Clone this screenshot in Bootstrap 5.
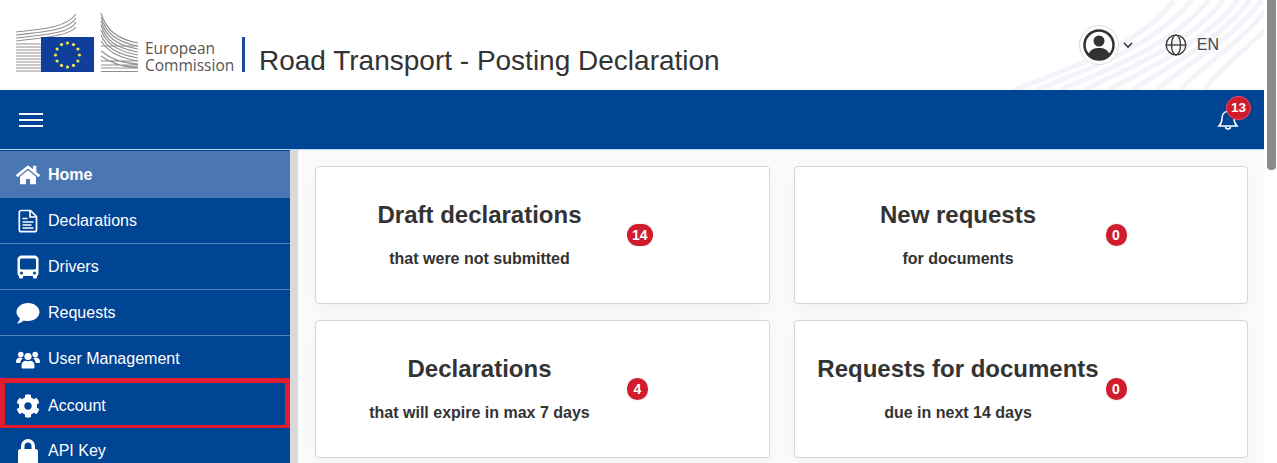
<!DOCTYPE html>
<html lang="en">
  <head>
    <meta charset="UTF-8" />
    <meta name="viewport" content="width=device-width, initial-scale=1.0" />
    <title>Road Transport - Posting Declaration</title>
    <link href="https://cdn.jsdelivr.net/npm/bootstrap@5.3.0/dist/css/bootstrap.min.css" rel="stylesheet" />
    <style>
      html, body {
        height: 463px;
        overflow: hidden;
      }
      body {
        font-family: "Liberation Sans", Arial, sans-serif;
        color: #333;
        background: #fff;
      }
      .page-col {
        width: 1264px;
        flex: none;
      }
      .fake-scroll {
        width: 13px;
        flex: none;
        padding: 0 1px 0 3px;
        background: #fff;
      }
      .fake-scroll div {
        height: 170px;
        background: #8a8a8a;
        border-radius: 0 0 4px 4px;
      }
      .top-head {
        height: 90px;
        padding-left: 16px;
        position: relative;
        overflow: hidden;
      }
      .head-waves {
        position: absolute;
        right: 0;
        top: 0;
      }
      .logo-pic {
        margin-top: 13px;
        flex: none;
      }
      .logo-text {
        font-family: "Open Sans", sans-serif;
        font-size: 15.5px;
        line-height: 17px;
        color: #555;
        margin: 40px 0 0 7px;
        width: 97px;
        flex: none;
      }
      .logo-rule {
        width: 3px;
        height: 35px;
        background: #1d4a9c;
        margin: 37px 14px 0 0;
        flex: none;
      }
      .app-title {
        font-size: 28px;
        line-height: 32px;
        font-weight: 400;
        margin: 45px 0 0;
        color: #333;
        white-space: nowrap;
      }
      .head-tools {
        position: relative;
        margin: 25px 45px 0 auto;
        height: 40px;
      }
      .user-ring {
        width: 40px;
        height: 40px;
        border-radius: 50%;
        border: 1px solid #ddd;
        background: #fff;
      }
      .lang-txt {
        font-size: 16px;
        color: #444;
        margin-left: 10px;
      }
      .blue-bar {
        height: 60px;
        background: #004494;
        border-bottom: 1px solid #b9d4ee;
        padding: 0 24px 0 19px;
      }
      .burger {
        width: 24px;
        height: 14px;
        border-top: 2px solid #fff;
        border-bottom: 2px solid #fff;
        position: relative;
      }
      .burger::after {
        content: "";
        position: absolute;
        left: 0;
        right: 0;
        top: 4px;
        height: 2px;
        background: #fff;
      }
      .bell-wrap {
        position: relative;
        width: 24px;
        height: 24px;
      }
      .bell-count {
        position: absolute;
        left: 10px;
        top: -12px;
        font-size: 13.5px;
        line-height: 14px;
        padding: 4px 4px;
        min-width: 24px;
        border-radius: 12px;
        background: #d01c2c;
        border: 1px solid #e46;
      }
      .lower-wrap {
        height: 314px;
        background: #fafafa;
        overflow: hidden;
      }
      .side-menu {
        width: 298px;
        flex: none;
        background: #004494;
        border-right: 8px solid #d9d9d9;
        border-radius: 0;
        padding-top: 1px;
        --bs-list-group-bg: transparent;
        --bs-list-group-border-width: 0;
      }
      .side-link {
        position: relative;
        height: 46px;
        flex: none;
        padding: 1px 0 0 16px;
        color: #fff;
        background: #004494;
        font-size: 16px;
        border-bottom: 1px solid #4d7fb8 !important;
      }
      .side-link.home-on {
        height: 47px;
        background: #4a77b4;
        font-weight: 700;
        border-bottom: 0 !important;
      }
      .side-link svg {
        width: 24px;
        height: 24px;
        margin-right: 8px;
        flex: none;
        fill: #fff;
      }
      .side-link.marked {
        border-bottom: 0 !important;
      }
      .side-link.marked::after {
        content: "";
        position: absolute;
        left: 0;
        right: 0;
        top: -4px;
        height: 52px;
        border: 5px solid #e31b2f;
      }
      .main-zone {
        flex: 1;
        padding: 16px 16px 0 17px;
        overflow: hidden;
      }
      .stat-card {
        height: 138px;
        padding-left: 16px;
        border: 1px solid #d6d6d6;
        border-radius: 4px;
        box-shadow: 0 6px 14px rgba(0, 0, 0, 0.03);
      }
      .stat-text {
        width: 295px;
        flex: none;
        text-align: center;
        font-weight: 700;
      }
      .stat-text h2 {
        font-size: 24px;
        line-height: 28px;
        font-weight: 700;
        margin: 0 0 20px;
        color: #333;
        white-space: nowrap;
      }
      .stat-text p {
        font-size: 16px;
        line-height: 20px;
        margin: 0;
      }
      .stat-count {
        font-size: 14px;
        line-height: 14px;
        padding: 4px 5px;
        min-width: 21px;
        border-radius: 11px;
        background: #d01c2c;
        box-shadow: 0 0 2px rgba(0, 0, 0, 0.2);
      }
    </style>
  </head>
  <body>
    <div class="d-flex">
      <div class="page-col">
        <header class="top-head d-flex">
          <svg class="head-waves" width="260" height="90" viewBox="0 0 260 90" fill="none" stroke="#f3f4f9" stroke-width="5">
            <path d="M10 90C90 60 140 40 170 0" />
            <path d="M32 90C105 62 155 40 188 0" />
            <path d="M56 90C120 64 172 40 205 0" />
            <path d="M80 90C135 64 188 40 220 0" />
            <path d="M104 90C150 66 203 40 234 0" />
            <path d="M128 90C165 66 216 40 246 0" />
            <path d="M152 90C180 66 228 40 258 0" />
            <path d="M176 90C198 66 240 40 262 10" />
            <path d="M200 90C215 70 245 45 262 30" />
          </svg>
          <svg class="logo-pic" width="122" height="60" viewBox="0 0 122 60" fill="none">
            <g stroke="#8f8f8f" stroke-width="1.1">
              <path d="M0 19C25 16 50 15 60 1" />
              <path d="M0 22C25 19 52 18 60 5" />
              <path d="M0 25C25 22 54 21 60 9" />
              <path d="M0 28C20 25 52 24 60 14" />
              <path d="M0 31H25M0 34H25M0 37H25M0 40H25M0 43H25M0 46H25M0 49H25M0 52H25M0 55H25M0 58H25" />
              <path d="M85 0C90 16 100 26 122 30" />
              <path d="M85 4C90 20 100 29 122 33" />
              <path d="M85 8C90 24 100 32 122 36" />
              <path d="M85 12C90 28 100 35 122 39" />
              <path d="M85 17C90 30 100 38 122 42" />
              <path d="M85 22C90 34 100 41 122 45" />
              <path d="M85 28C92 38 100 44 122 48" />
              <path d="M85 33H122M85 38C95 46 105 50 122 51M85 43C95 50 105 54 122 54M85 48H122M85 52H122M85 55H122M85 58.500H122" />
            </g>
            <rect x="25" y="24" width="53" height="35" fill="#0f3f9b" />
            <g fill="#f2e85a">
              <circle cx="51.500" cy="30" r="1.600" />
              <circle cx="57.500" cy="31.600" r="1.600" />
              <circle cx="61.900" cy="36" r="1.600" />
              <circle cx="63.500" cy="42" r="1.600" />
              <circle cx="61.900" cy="48" r="1.600" />
              <circle cx="57.500" cy="52.400" r="1.600" />
              <circle cx="51.500" cy="54" r="1.600" />
              <circle cx="45.500" cy="52.400" r="1.600" />
              <circle cx="41.100" cy="48" r="1.600" />
              <circle cx="39.500" cy="42" r="1.600" />
              <circle cx="41.100" cy="36" r="1.600" />
              <circle cx="45.500" cy="31.600" r="1.600" />
            </g>
          </svg>
          <div class="logo-text">European Commission</div>
          <div class="logo-rule"></div>
          <h1 class="app-title">Road Transport - Posting Declaration</h1>
          <div class="head-tools d-flex align-items-center">
            <div class="user-ring d-flex align-items-center justify-content-center">
              <svg width="34" height="34" viewBox="0 0 34 34">
                <circle cx="17" cy="17" r="14.500" fill="none" stroke="#333" stroke-width="2.500" />
                <circle cx="17" cy="13" r="5.500" fill="#333" />
                <path d="M6.500 26.500C8 21.500 12 20 17 20s9 1.500 10.500 6.500A14 14 0 0 1 17 31 14 14 0 0 1 6.500 26.500z" fill="#333" />
              </svg>
            </div>
            <svg class="ms-1 me-4" width="10" height="8" viewBox="0 0 10 8" fill="none" stroke="#333" stroke-width="1.600"><path d="M1 2l4 4 4-4" /></svg>
            <svg class="ms-2" width="22" height="22" viewBox="0 0 22 22" fill="none" stroke="#333" stroke-width="1.300">
              <circle cx="11" cy="11" r="9.800" />
              <ellipse cx="11" cy="11" rx="4.500" ry="9.800" />
              <path d="M1.200 11h19.600" />
            </svg>
            <span class="lang-txt">EN</span>
          </div>
        </header>

        <nav class="blue-bar d-flex align-items-center justify-content-between">
          <div class="burger"></div>
          <div class="bell-wrap">
            <svg width="24" height="24" viewBox="0 0 24 24" fill="none" stroke="#fff" stroke-width="1.500">
              <path d="M12 3.500c-3.800 0-6 3-6 6.500 0 4-1 6-3 8h18c-2-2-3-4-3-8 0-3.500-2.200-6.500-6-6.500z" />
              <path d="M9.500 18.500a2.500 2.500 0 0 0 5 0" />
            </svg>
            <span class="badge rounded-pill bell-count">13</span>
          </div>
        </nav>

        <div class="lower-wrap d-flex">
          <div class="list-group side-menu">
            <a class="list-group-item side-link home-on d-flex align-items-center" href="#">
              <svg viewBox="0 0 576 512"><path d="M280.370 148.260L96 300.110V464a16 16 0 0 0 16 16l112.060-.29a16 16 0 0 0 15.920-16V368a16 16 0 0 1 16-16h64a16 16 0 0 1 16 16v95.640a16 16 0 0 0 16 16.050L464 480a16 16 0 0 0 16-16V300L295.670 148.260a12.190 12.190 0 0 0-15.300 0zM571.600 251.470L488 182.560V44.050a12 12 0 0 0-12-12h-56a12 12 0 0 0-12 12v72.610L318.470 43a48 48 0 0 0-61 0L4.340 251.470a12 12 0 0 0-1.600 16.900l25.500 31A12 12 0 0 0 45.150 301l235.220-193.740a12.190 12.190 0 0 1 15.300 0L530.900 301a12 12 0 0 0 16.900-1.600l25.500-31a12 12 0 0 0-1.700-16.930z" /></svg>
              Home
            </a>
            <a class="list-group-item side-link d-flex align-items-center" href="#">
              <svg viewBox="0 0 24 24" stroke="#fff" stroke-width="1.700">
                <path fill="#004494" d="M5 1.500h9.500l6 6V21a1.700 1.700 0 0 1-1.700 1.700H5A1.700 1.700 0 0 1 3.300 21V3.200A1.700 1.700 0 0 1 5 1.500z" />
                <path fill="none" d="M14 1.500V8h6.500M6.500 9.500h5M6.500 13h11M6.500 16h9M6.500 19h11" />
              </svg>
              Declarations
            </a>
            <a class="list-group-item side-link d-flex align-items-center" href="#">
              <svg viewBox="1 0 22 24">
                <path fill-rule="evenodd" d="M6 .5h12A4 4 0 0 1 22.500 5v14a2 2 0 0 1-1.500 2v1.500a1 1 0 0 1-1 1h-2a1 1 0 0 1-1-1V21H7v1.500a1 1 0 0 1-1 1H4a1 1 0 0 1-1-1V21a2 2 0 0 1-1.500-2V5A4 4 0 0 1 6 .5zM5.500 3.500A1.500 1.500 0 0 0 4 5v8a1.500 1.500 0 0 0 1.500 1.500h13A1.500 1.500 0 0 0 20 13V5a1.500 1.500 0 0 0-1.500-1.500zM5.500 16.500a1.500 1.500 0 1 0 0 3 1.500 1.500 0 0 0 0-3zM18.500 16.500a1.500 1.500 0 1 0 0 3 1.500 1.500 0 0 0 0-3z" />
              </svg>
              Drivers
            </a>
            <a class="list-group-item side-link d-flex align-items-center" href="#">
              <svg viewBox="0 0 24 24"><path d="M12 2c6.400 0 11.500 4 11.500 9S18.400 20 12 20c-1.500 0-2.900-.2-4.200-.6C6.300 20.600 4 22.500.9 22.500c1.700-1.700 2.800-3.500 3-5.200C1.800 15.800.500 13.500.500 11 .5 6 5.600 2 12 2z" /></svg>
              Requests
            </a>
            <a class="list-group-item side-link d-flex align-items-center" href="#">
              <svg viewBox="0 0 24 24">
                <circle cx="4.800" cy="7.500" r="2.800" />
                <circle cx="19.200" cy="7.500" r="2.800" />
                <circle cx="12" cy="9.500" r="3.600" />
                <path d="M0 15c0-3 1.500-4.500 4-4.500 1.200 0 2 .3 2.800 1-1.400 1-2.300 2.400-2.500 4.500H1a1 1 0 0 1-1-1zM24 15c0-3-1.500-4.500-4-4.500-1.200 0-2 .3-2.800 1 1.400 1 2.300 2.400 2.500 4.500H23a1 1 0 0 0 1-1z" />
                <path d="M5.500 18.500c0-3 2-4.800 4-4.800.8 0 1.500.5 2.500.5s1.700-.5 2.500-.5c2 0 4 1.800 4 4.800V20a1.500 1.500 0 0 1-1.500 1.500H7A1.500 1.500 0 0 1 5.500 20z" />
              </svg>
              User Management
            </a>
            <a class="list-group-item side-link marked d-flex align-items-center" href="#">
              <svg viewBox="0 0 512 512"><path d="M487.400 315.700l-42.600-24.600c4.300-23.200 4.300-47 0-70.200l42.600-24.600c4.900-2.800 7.100-8.600 5.500-14-11.100-35.600-30-67.800-54.700-94.600-3.800-4.100-10-5.100-14.800-2.300L380.800 110c-17.900-15.400-38.500-27.300-60.800-35.100V25.800c0-5.600-3.900-10.500-9.400-11.700-36.700-8.200-74.300-7.800-109.200 0-5.500 1.200-9.400 6.100-9.400 11.700V75c-22.200 7.900-42.800 19.800-60.800 35.100L88.700 85.500c-4.900-2.800-11-1.900-14.800 2.300-24.700 26.700-43.600 58.900-54.700 94.600-1.700 5.400.6 11.200 5.500 14L67.300 221c-4.300 23.200-4.300 47 0 70.200l-42.600 24.600c-4.900 2.800-7.100 8.600-5.500 14 11.100 35.600 30 67.800 54.700 94.600 3.800 4.100 10 5.100 14.800 2.300l42.600-24.600c17.900 15.400 38.500 27.300 60.800 35.100v49.200c0 5.600 3.900 10.500 9.400 11.700 36.700 8.200 74.300 7.800 109.200 0 5.500-1.200 9.400-6.100 9.400-11.700v-49.200c22.200-7.900 42.800-19.800 60.800-35.100l42.600 24.600c4.900 2.800 11 1.900 14.800-2.300 24.700-26.700 43.600-58.900 54.700-94.600 1.500-5.500-.7-11.300-5.600-14.100zM256 336c-44.100 0-80-35.900-80-80s35.900-80 80-80 80 35.900 80 80-35.900 80-80 80z" /></svg>
              Account
            </a>
            <a class="list-group-item side-link d-flex align-items-center" href="#">
              <svg viewBox="0 0 24 24"><path fill-rule="evenodd" d="M12 0a7 7 0 0 1 7 7v3h.500A2.500 2.500 0 0 1 22 12.500V24H2V12.500A2.500 2.500 0 0 1 4.500 10H5V7a7 7 0 0 1 7-7zm0 3.500A3.500 3.500 0 0 0 8.500 7v3h7V7A3.500 3.500 0 0 0 12 3.500z" /></svg>
              API Key
            </a>
          </div>

          <main class="main-zone">
            <div class="row gx-4 gy-3">
              <div class="col-6">
                <div class="card stat-card flex-row align-items-center">
                  <div class="stat-text">
                    <h2>Draft declarations</h2>
                    <p>that were not submitted</p>
                  </div>
                  <span class="badge stat-count">14</span>
                </div>
              </div>
              <div class="col-6">
                <div class="card stat-card flex-row align-items-center">
                  <div class="stat-text">
                    <h2>New requests</h2>
                    <p>for documents</p>
                  </div>
                  <span class="badge stat-count">0</span>
                </div>
              </div>
              <div class="col-6">
                <div class="card stat-card flex-row align-items-center">
                  <div class="stat-text">
                    <h2>Declarations</h2>
                    <p>that will expire in max 7 days</p>
                  </div>
                  <span class="badge stat-count">4</span>
                </div>
              </div>
              <div class="col-6">
                <div class="card stat-card flex-row align-items-center">
                  <div class="stat-text">
                    <h2>Requests for documents</h2>
                    <p>due in next 14 days</p>
                  </div>
                  <span class="badge stat-count">0</span>
                </div>
              </div>
            </div>
          </main>
        </div>
      </div>
      <div class="fake-scroll"><div></div></div>
    </div>
    <script src="https://cdn.jsdelivr.net/npm/bootstrap@5.3.0/dist/js/bootstrap.bundle.min.js"></script>
  </body>
</html>
